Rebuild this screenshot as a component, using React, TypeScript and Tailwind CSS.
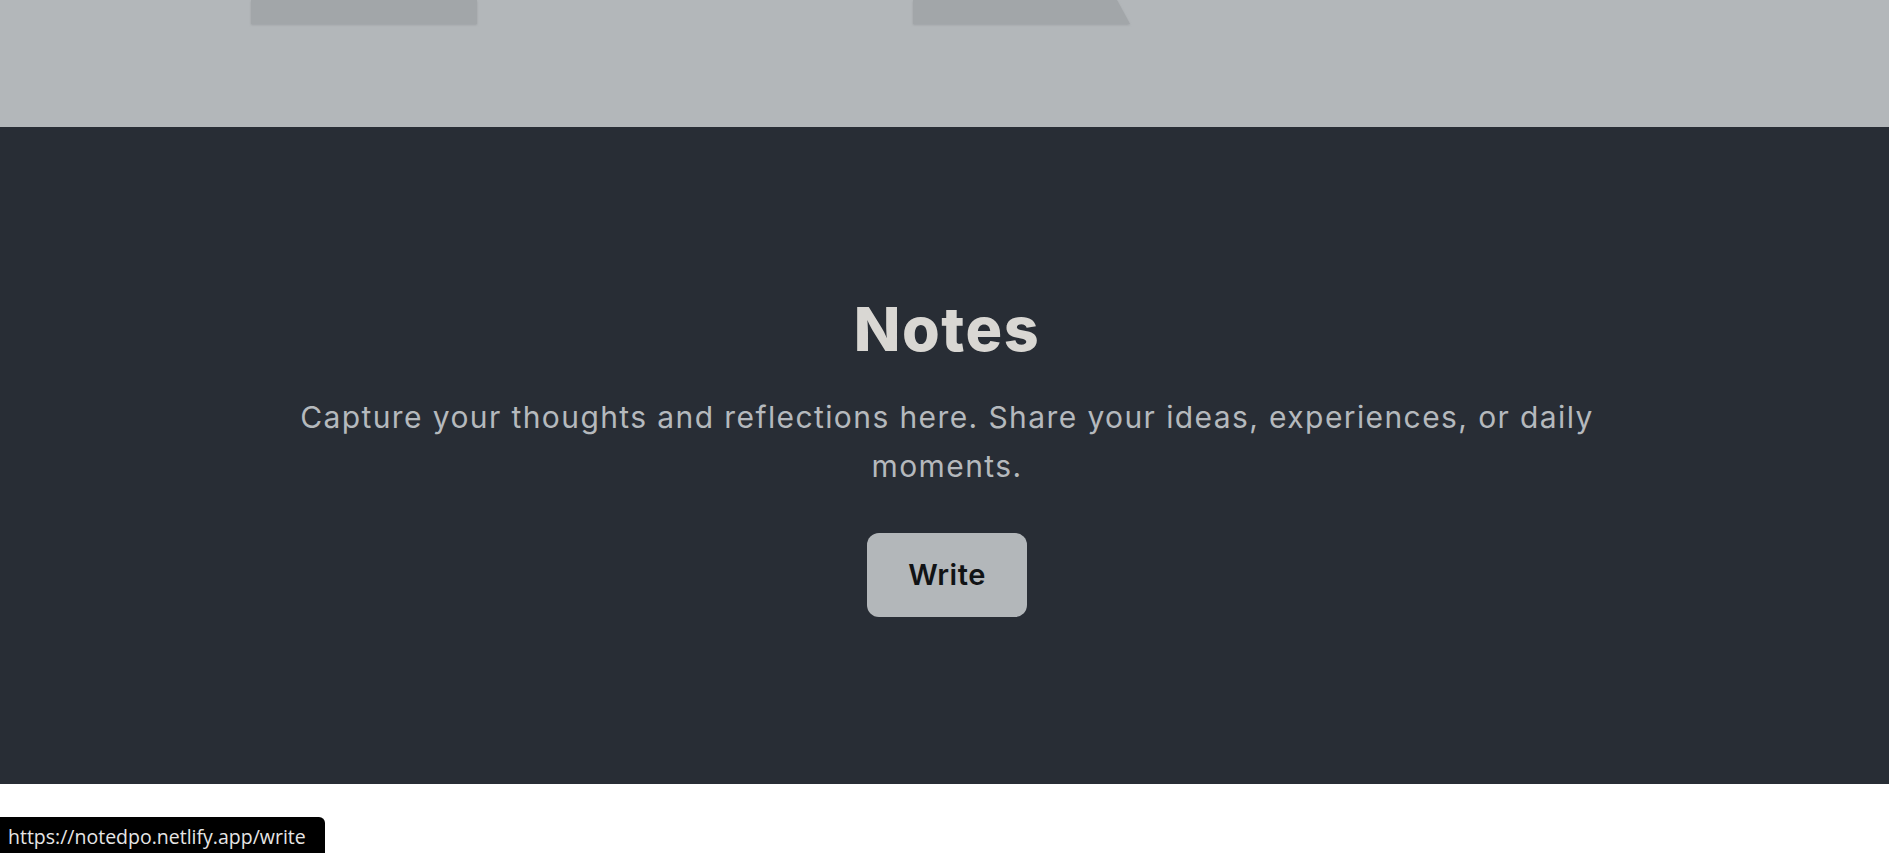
import React from 'react';

const App = () => {
  return (
    <div className="min-h-screen bg-white font-['Inter',sans-serif]">
      {/* hero tail */}
      <div className="h-[127px] bg-[#b3b7ba]">
        <svg width="100%" height="127" className="block">
          <defs>
            <filter id="sh" x="-5%" y="-20%" width="110%" height="160%">
              <feDropShadow dx="0" dy="1" stdDeviation="1.2" floodColor="#8d9194" floodOpacity="0.6" />
            </filter>
          </defs>
          <g filter="url(#sh)" fill="#a2a6a9">
            <rect x="251" y="0" width="226" height="24" />
            <polygon points="913,0 1117,0 1130,24 913,24" />
          </g>
        </svg>
      </div>

      {/* notes */}
      <section className="h-[657px] bg-[#282d35] flex flex-col items-center pt-[172px] pl-[5px]">
        <h1 className="text-[61px] leading-none font-extrabold text-[#d9d7d3] tracking-[1.5px]">Notes</h1>
        <p className="mt-[33px] max-w-[1340px] text-center text-[30px] leading-[49px] text-[#b5b9bd] tracking-[1.4px]">
          Capture your thoughts and reflections here. Share your ideas, experiences, or daily moments.
        </p>
        <button className="mt-[42px] w-[160px] h-[84px] rounded-[12px] bg-[#b3b7ba] text-[#111315] text-[29px] font-semibold tracking-[0.5px]">
          Write
        </button>
      </section>

      {/* status bubble */}
      <div className="fixed left-0 bottom-0 h-[36px] w-[325px] bg-black rounded-tr-[6px] flex items-center pl-[8px] pt-[3px] text-[#e6e6e6] text-[19.5px] font-['Open_Sans',sans-serif]">
        https://notedpo.netlify.app/write
      </div>
    </div>
  );
};

export default App;
